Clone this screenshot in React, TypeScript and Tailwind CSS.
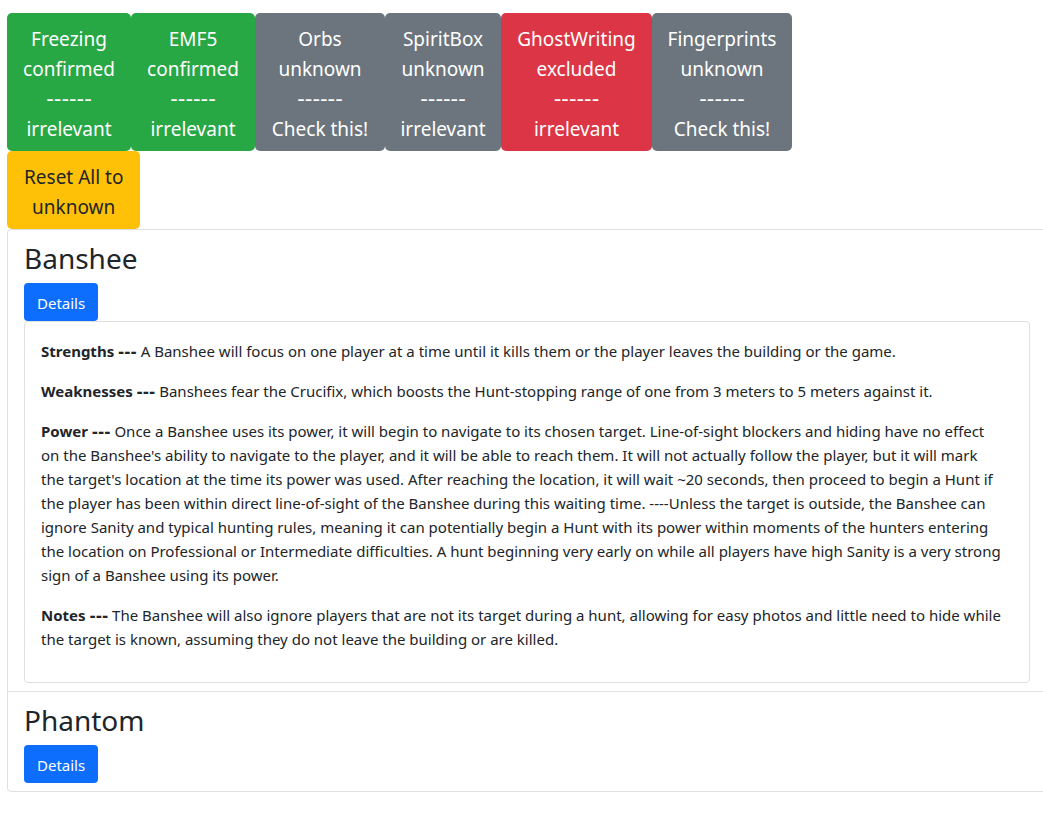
type Evidence = { name: string; status: "confirmed" | "unknown" | "excluded"; hint: string; width: string };

const evidence: Evidence[] = [
  { name: "Freezing", status: "confirmed", hint: "irrelevant", width: "w-[124px]" },
  { name: "EMF5", status: "confirmed", hint: "irrelevant", width: "w-[124px]" },
  { name: "Orbs", status: "unknown", hint: "Check this!", width: "w-[130px]" },
  { name: "SpiritBox", status: "unknown", hint: "irrelevant", width: "w-[116px]" },
  { name: "GhostWriting", status: "excluded", hint: "irrelevant", width: "w-[151px]" },
  { name: "Fingerprints", status: "unknown", hint: "Check this!", width: "w-[140px]" },
];

const statusColor = {
  confirmed: "bg-[#28a745]",
  unknown: "bg-[#6c757d]",
  excluded: "bg-[#dc3545]",
};

const banshee = [
  {
    label: "Strengths",
    text: "A Banshee will focus on one player at a time until it kills them or the player leaves the building or the game.",
  },
  {
    label: "Weaknesses",
    text: "Banshees fear the Crucifix, which boosts the Hunt-stopping range of one from 3 meters to 5 meters against it.",
  },
  {
    label: "Power",
    text: "Once a Banshee uses its power, it will begin to navigate to its chosen target. Line-of-sight blockers and hiding have no effect on the Banshee's ability to navigate to the player, and it will be able to reach them. It will not actually follow the player, but it will mark the target's location at the time its power was used. After reaching the location, it will wait ~20 seconds, then proceed to begin a Hunt if the player has been within direct line-of-sight of the Banshee during this waiting time. ----Unless the target is outside, the Banshee can ignore Sanity and typical hunting rules, meaning it can potentially begin a Hunt with its power within moments of the hunters entering the location on Professional or Intermediate difficulties. A hunt beginning very early on while all players have high Sanity is a very strong sign of a Banshee using its power.",
  },
  {
    label: "Notes",
    text: "The Banshee will also ignore players that are not its target during a hunt, allowing for easy photos and little need to hide while the target is known, assuming they do not leave the building or are killed.",
  },
];

function Ghost({ name, details }: { name: string; details?: { label: string; text: string }[] }) {
  return (
    <li className="border-b border-[#dfdfdf] px-4 py-2 last:border-b-0">
      <h2 className="mb-[6px] pt-[2px] text-[28px] leading-[37px]">{name}</h2>
      <button type="button" className="block rounded bg-[#0d6efd] px-[13px] pb-[6px] pt-2 leading-6 text-white">
        Details
      </button>
      {details && (
        <div className="rounded border border-[#dfdfdf] pb-[15px] pl-4 pr-[26px] pt-[17px]">
          {details.map((d) => (
            <p key={d.label} className="mb-4">
              <b>
                {`${d.label} `}
                <span className="font-['DejaVu_Sans',sans-serif] leading-none">---</span>
              </b>{" "}
              {d.text}
            </p>
          ))}
        </div>
      )}
    </li>
  );
}

export default function App() {
  return (
    <main className="overflow-x-hidden bg-white pl-[7px] pt-[13px] font-['Noto_Sans','Open_Sans',sans-serif] text-[15px] leading-6 text-[#212529]">
      <div className="flex flex-wrap">
        {evidence.map((e) => (
          <button
            key={e.name}
            type="button"
            className={`${e.width} ${statusColor[e.status]} rounded-[5px] pb-[7px] pt-[11px] text-center text-[19px] leading-[30px] text-white`}
          >
            <span className="block">{e.name}</span>
            <span className="block">{e.status}</span>
            <span className="block font-['DejaVu_Sans',sans-serif] text-[21px]">------</span>
            <span className="block">{e.hint}</span>
          </button>
        ))}
      </div>
      <button type="button" className="block rounded-[5px] bg-[#ffc107] px-[17px] pb-[7px] pt-[11px] text-[19px] leading-[30px]">
        Reset All to
        <br />
        unknown
      </button>
      <ul className="-mr-1 rounded border border-[#dfdfdf]">
        <Ghost name="Banshee" details={banshee} />
        <Ghost name="Phantom" />
      </ul>
    </main>
  );
}
